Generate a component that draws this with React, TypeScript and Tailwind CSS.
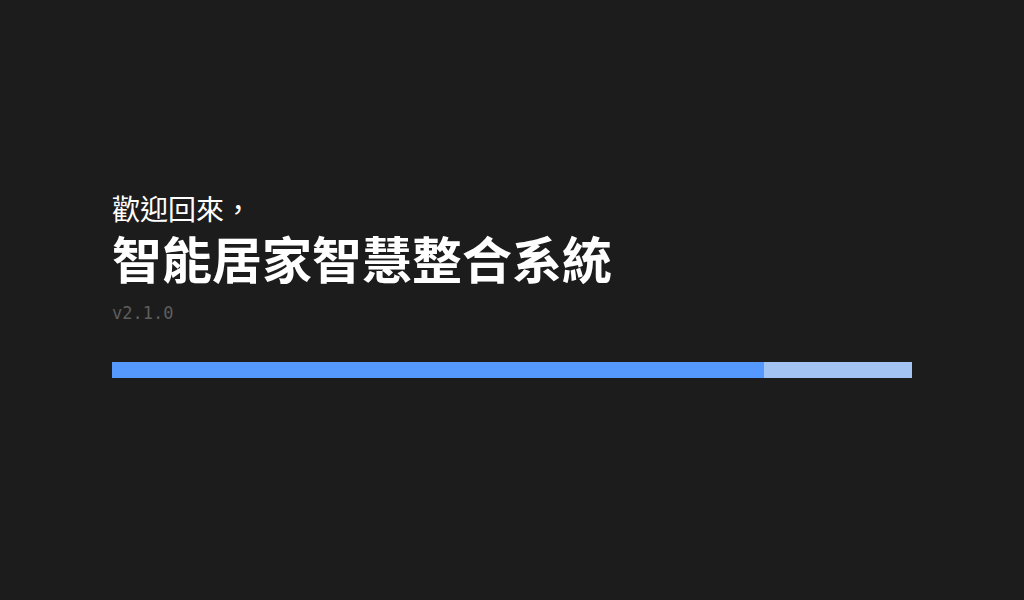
import React from "react";

export default function App() {
  const progress = 81.5;
  return (
    <div className="w-[1024px] h-[600px] bg-[#1c1c1c] flex flex-col justify-center px-[112px] pb-[32px] font-['Noto_Sans_CJK_TC',sans-serif]">
      <div className="text-[28px] leading-[36px] text-white font-normal">歡迎回來，</div>
      <div className="text-[50px] leading-[62px] text-white font-bold">智能居家智慧整合系統</div>
      <div className="mt-[13px] text-[17px] leading-[24px] text-[#5e5e5e] font-['DejaVu_Sans_Mono',monospace]">v2.1.0</div>
      <div className="mt-[37px] w-[800px] h-[16px] bg-[#a3c3f3] flex">
        <div className="h-full bg-[#5599ff]" style={{ width: `${progress}%` }} />
      </div>
    </div>
  );
}
